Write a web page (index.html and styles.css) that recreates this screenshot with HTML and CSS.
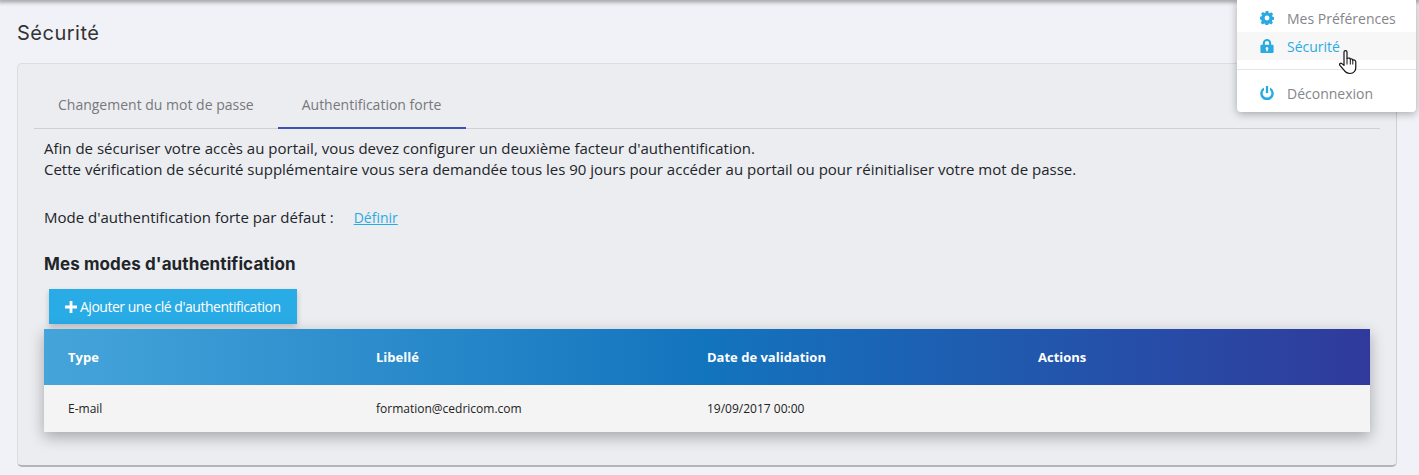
FILE: index.html
```html
<!DOCTYPE html>
<html>
    <head>
        <title>Sécurité</title>
        <link rel="stylesheet" href="styles.css">
    </head>
    <body>
        <div class="topbar"></div>
        <h1 class="title">Sécurité</h1>
        <div class="panel">
            <div class="tabs">
                <div class="tab">Changement du mot de passe</div>
                <div class="tab active">Authentification forte</div>
            </div>
            <div class="content">
                <p class="intro">Afin de sécuriser votre accès au portail, vous devez configurer un deuxième facteur d'authentification.<br>Cette vérification de sécurité supplémentaire vous sera demandée tous les 90 jours pour accéder au portail ou pour réinitialiser votre mot de passe.</p>
                <p class="default-mode">Mode d'authentification forte par défaut :<a class="define" href="#">Définir</a></p>
                <h2 class="subtitle">Mes modes d'authentification</h2>
                <button class="add-btn"><svg class="plus" viewBox="0 0 12 12"><path d="M4.600 0h2.800v4.600H12v2.800H7.400V12H4.600V7.400H0V4.600h4.600z"/></svg>Ajouter une clé d'authentification</button>
                <div class="table">
                    <div class="row head">
                        <div>Type</div>
                        <div>Libellé</div>
                        <div>Date de validation</div>
                        <div>Actions</div>
                    </div>
                    <div class="row body-row">
                        <div>E-mail</div>
                        <div>formation@cedricom.com</div>
                        <div>19/09/2017 00:00</div>
                        <div></div>
                    </div>
                </div>
            </div>
        </div>

        <div class="menu">
            <div class="menu-item">
                <svg class="menu-icon" viewBox="0 0 16 16"><path fill-rule="evenodd" d="M6.500 0h3l.4 2.100 1.200.5 1.800-1.200 2.100 2.100-1.200 1.800.5 1.200 1.700.4v3l-1.900.4-.5 1.200 1.200 1.800-2.100 2.100-1.800-1.200-1.200.5-.4 1.900h-3l-.4-1.900-1.200-.5-1.800 1.200-2.100-2.100 1.200-1.800-.5-1.200L0 9.500v-3l1.900-.4.5-1.200-1.200-1.800 2.100-2.100 1.800 1.200 1.200-.5zM8 5.200a2.800 2.800 0 1 0 0 5.600 2.800 2.800 0 0 0 0-5.600z"/></svg>
                <span>Mes Préférences</span>
            </div>
            <div class="menu-item hover">
                <svg class="menu-icon" viewBox="0 0 16 16"><path fill-rule="evenodd" d="M3.200 6.500V4.800a4.800 4.800 0 0 1 9.600 0v1.700h1.300c.9 0 1.400.6 1.400 1.400v6.700c0 .9-.6 1.400-1.400 1.400H1.900c-.9 0-1.400-.6-1.400-1.400V7.900c0-.9.6-1.400 1.400-1.400zm2.400 0h4.800V4.800a2.400 2.400 0 0 0-4.800 0zM8 9.200a1.600 1.600 0 0 0-.9 2.900V14h1.800v-1.900A1.600 1.600 0 0 0 8 9.200z"/></svg>
                <span>Sécurité</span>
            </div>
            <div class="menu-sep"></div>
            <div class="menu-item">
                <svg class="menu-icon" viewBox="0 0 16 16"><path d="M6.700 0h2.600v8.200H6.700z"/><path d="M4.600 1.700v2.900a5 5 0 1 0 6.800 0V1.700a7.700 7.700 0 1 1-6.800 0z"/></svg>
                <span>Déconnexion</span>
            </div>
        </div>
        <svg class="cursor" viewBox="0 0 18 25"><path d="M5 2c0-1.800 3-1.800 3 0v6.500l.8-.3c1.300-.5 2.400 0 2.500 1 1.100-.5 2.300-.2 2.500.9 1.300-.4 3 .2 3 1.800v5.300c0 2-.5 3.300-1.300 4.300-.9 1.100-2.200 2-4.500 2-3.500 0-4.500-1-6-3.300L.9 15.300c-.9-1.300.7-2.800 2-1.700L5 15.400z" fill="#fff" stroke="#111" stroke-width="1.200" stroke-linejoin="round"/><path d="M8 8.500v6M11.300 9.200v5.300M13.800 10.100v4.400" stroke="#111" fill="none"/></svg>
    </body>
</html>
```

FILE: styles.css
```css
body{
    margin: 0;
    height: 475px;
    overflow: hidden;
    background-color: #f1f2f7;
    font-family: "Open Sans", sans-serif;
    font-size: 14px;
    color: #212529;
    position: relative;
}
.topbar{
    height: 0;
    box-shadow: 0 0 4px 2px rgba(60,60,60,.55);
}
.title{
    margin: 0;
    padding: 20px 0 0 17px;
    height: 43px;
    font-family: Inter, sans-serif;
    font-size: 20px;
    font-weight: 400;
    line-height: 26px;
    letter-spacing: .5px;
    color: #333;
}
.panel{
    margin-left: 17px;
    width: 1380px;
    height: 404px;
    box-sizing: border-box;
    background-color: #ecedf1;
    border: 1px solid #dcdde1;
    border-bottom: 2px solid #b4b5b9;
    border-right-color: #cfd0d4;
    border-radius: 5px;
    padding: 0 16px;
}
.tabs{
    display: flex;
    height: 64px;
    border-bottom: 1px solid #cfd0d6;
    box-sizing: content-box;
}
.tab{
    padding: 0 24px;
    line-height: 82px;
    height: 64px;
    color: #77787c;
    box-sizing: border-box;
}
.tab.active{
    border-bottom: 2px solid #3f51b5;
    height: 65px;
    width: 188px;
}
.content{
    padding: 0 10px;
}
.intro{
    margin: 0;
    padding-top: 9px;
    font-size: 15px;
    line-height: 21px;
    height: 68px;
}
.default-mode{
    margin: 0;
    padding-top: 1px;
    font-size: 15px;
    line-height: 21px;
    height: 46px;
}
.define{
    margin-left: 20px;
    color: #29abe2;
    font-size: 14px;
}
.subtitle{
    margin: 0;
    font-family: Inter, sans-serif;
    font-size: 17px;
    font-weight: 700;
    line-height: 22px;
    letter-spacing: .11px;
    height: 36px;
    color: #212529;
}
.add-btn{
    display: flex;
    align-items: center;
    margin-left: 5px;
    width: 248px;
    height: 35px;
    padding: 0 0 0 16px;
    border: 0;
    background-color: #29abe6;
    color: white;
    font-family: "Open Sans", sans-serif;
    font-size: 14px;
    letter-spacing: -.48px;
    box-shadow: 0 3px 6px rgba(0,0,0,.2);
}
.plus{
    width: 12px;
    height: 12px;
    fill: white;
    margin-right: 3px;
}
.table{
    margin-top: 5px;
    width: 1326px;
    box-shadow: 0 5px 14px rgba(0,0,0,.3);
}
.row{
    display: grid;
    grid-template-columns: 308px 331px 331px 1fr;
    padding-left: 24px;
    align-items: center;
    font-size: 12px;
}
.head{
    height: 56px;
    background: linear-gradient(to right, #45a5da, #1374be 50%, #303a9c);
    color: white;
    font-weight: 700;
    font-size: 13px;
}
.body-row{
    height: 47px;
    background-color: #f4f4f4;
    color: #222;
}
.menu{
    position: absolute;
    top: 0;
    left: 1237px;
    width: 179px;
    height: 112px;
    padding-top: 4px;
    box-sizing: border-box;
    background-color: white;
    border-radius: 0 0 4px 4px;
    box-shadow: 0 2px 8px rgba(0,0,0,.3);
}
.menu-item{
    display: flex;
    align-items: center;
    height: 28px;
    padding-left: 23px;
    color: #85868a;
}
.menu-item span{
    margin-left: 13px;
}
.menu-item.hover{
    background-color: #f7f7f8;
    color: #29abe2;
}
.menu-sep{
    margin: 9px 0 9px;
    height: 1px;
    background-color: #e6e6e8;
}
.menu-icon{
    width: 14px;
    height: 14px;
    fill: #29abe2;
}
.cursor{
    position: absolute;
    left: 1339px;
    top: 50px;
    width: 18px;
    height: 25px;
}
```
